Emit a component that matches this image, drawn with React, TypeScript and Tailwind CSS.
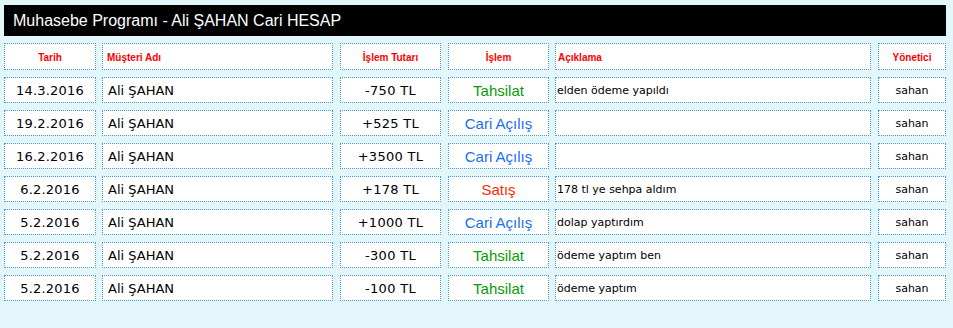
const rows = [
  { date: "14.3.2016", amount: "-750 TL", type: "Tahsilat", note: "elden ödeme yapıldı" },
  { date: "19.2.2016", amount: "+525 TL", type: "Cari Açılış", note: "" },
  { date: "16.2.2016", amount: "+3500 TL", type: "Cari Açılış", note: "" },
  { date: "6.2.2016", amount: "+178 TL", type: "Satış", note: "178 tl ye sehpa aldım" },
  { date: "5.2.2016", amount: "+1000 TL", type: "Cari Açılış", note: "dolap yaptırdım" },
  { date: "5.2.2016", amount: "-300 TL", type: "Tahsilat", note: "ödeme yaptım ben" },
  { date: "5.2.2016", amount: "-100 TL", type: "Tahsilat", note: "ödeme yaptım" },
];

const typeColor: Record<string, string> = {
  Tahsilat: "text-[#0a9a0a]",
  "Cari Açılış": "text-[#1a6ff0]",
  Satış: "text-[#ff2a00]",
};

const cell = "flex items-center bg-white border border-dotted border-[#3d9cff] overflow-hidden whitespace-nowrap pt-[2px]";

export default function App() {
  return (
    <div className="min-h-[328px] w-[953px] bg-[#e3f7fa] pt-[5px] pl-[4px] font-['DejaVu_Sans',Verdana,sans-serif] text-black">
      <div className="flex h-[31px] w-[942px] items-center bg-black pl-[9px] font-['Liberation_Sans',Arial,sans-serif] text-[16px] text-white">
        Muhasebe Programı - Ali ŞAHAN Cari HESAP
      </div>

      <div className="mt-[7px] flex h-[27px] font-['Liberation_Sans',Arial,sans-serif] text-[10px] font-bold text-[#ff0000]">
        <div className={`${cell} w-[92px] justify-center`}>Tarih</div>
        <div className={`${cell} ml-[6px] w-[231px] pl-[4px]`}>Müşteri Adı</div>
        <div className={`${cell} ml-[7px] w-[101px] justify-center`}>İşlem Tutarı</div>
        <div className={`${cell} ml-[7px] w-[101px] justify-center`}>İşlem</div>
        <div className={`${cell} ml-[6px] w-[316px] pl-[2px]`}>Açıklama</div>
        <div className={`${cell} ml-[7px] w-[68px] justify-center`}>Yönetici</div>
      </div>

      <div className="mt-[7px] flex flex-col gap-[7px]">
        {rows.map((r, i) => (
          <div key={i} className="flex h-[26px]">
            <div className={`${cell} w-[92px] justify-center text-[13px] tracking-[0.2px]`}>{r.date}</div>
            <div className={`${cell} ml-[6px] w-[231px] pl-[5px] text-[13px]`}>Ali ŞAHAN</div>
            <div className={`${cell} ml-[7px] w-[101px] justify-center text-[13px] tracking-[0.3px]`}>{r.amount}</div>
            <div
              className={`${cell} ml-[7px] w-[101px] justify-center font-['Liberation_Sans',Arial,sans-serif] text-[15px] ${typeColor[r.type]}`}
            >
              {r.type}
            </div>
            <div className={`${cell} ml-[6px] w-[316px] pl-[1px] text-[11px]`}>{r.note}</div>
            <div className={`${cell} ml-[7px] w-[68px] justify-center text-[11px]`}>sahan</div>
          </div>
        ))}
      </div>
    </div>
  );
}
